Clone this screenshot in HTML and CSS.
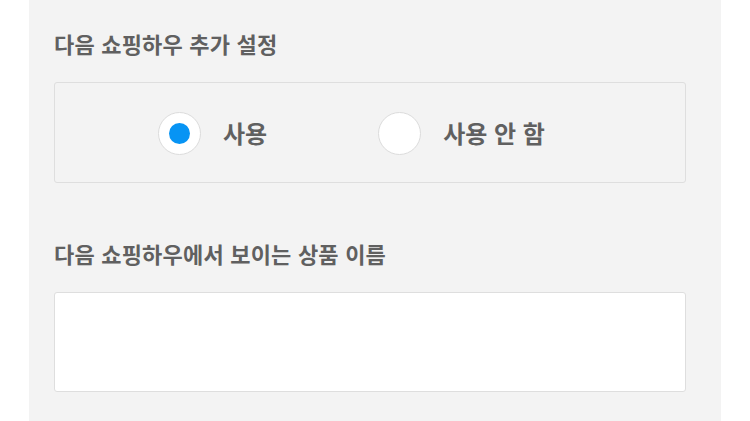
FILE: index.html
```html
<!DOCTYPE html>
<html lang="ko">
<head>
<meta charset="utf-8">
<link rel="stylesheet" href="styles.css">
</head>
<body>
<div class="panel">
  <h2 class="label">다음 쇼핑하우 추가 설정</h2>
  <div class="radio-box">
    <label class="radio-item">
      <span class="radio checked"><span class="dot"></span></span>
      <span class="radio-text">사용</span>
    </label>
    <label class="radio-item">
      <span class="radio"></span>
      <span class="radio-text">사용 안 함</span>
    </label>
  </div>
  <h2 class="label second">다음 쇼핑하우에서 보이는 상품 이름</h2>
  <div class="text-box"></div>
</div>
</body>
</html>
```
FILE: styles.css
```css
html, body {
  margin: 0;
  padding: 0;
  background: #ffffff;
}
body {
  font-family: "Noto Sans CJK KR", "Noto Sans", sans-serif;
}
.panel {
  margin-left: 29px;
  width: 692px;
  min-height: 421px;
  box-sizing: border-box;
  background: #f3f3f3;
  padding: 29px 35px 0 25px;
}
.label {
  margin: 0;
  font-size: 22px;
  line-height: 28px;
  font-weight: 700;
  color: #606060;
  letter-spacing: 0.2px;
}
.label.second {
  margin-top: 56px;
}
.radio-box {
  margin-top: 25px;
  height: 101px;
  box-sizing: border-box;
  border: 1px solid #dedede;
  border-radius: 3px;
  display: flex;
  align-items: center;
  padding: 2px 0 0 103px;
  gap: 111px;
}
.radio-item {
  display: flex;
  align-items: center;
  gap: 22px;
}
.radio {
  width: 43px;
  height: 43px;
  box-sizing: border-box;
  border: 1px solid #dcdcdc;
  border-radius: 50%;
  background: #ffffff;
  display: flex;
  align-items: center;
  justify-content: center;
}
.dot {
  width: 21px;
  height: 21px;
  border-radius: 50%;
  background: #0794f4;
}
.radio-text {
  font-size: 24px;
  line-height: 30px;
  font-weight: 700;
  color: #606060;
  margin-top: -2px;
}
.text-box {
  margin-top: 25px;
  height: 100px;
  box-sizing: border-box;
  background: #ffffff;
  border: 1px solid #dedede;
  border-radius: 3px;
}
```
